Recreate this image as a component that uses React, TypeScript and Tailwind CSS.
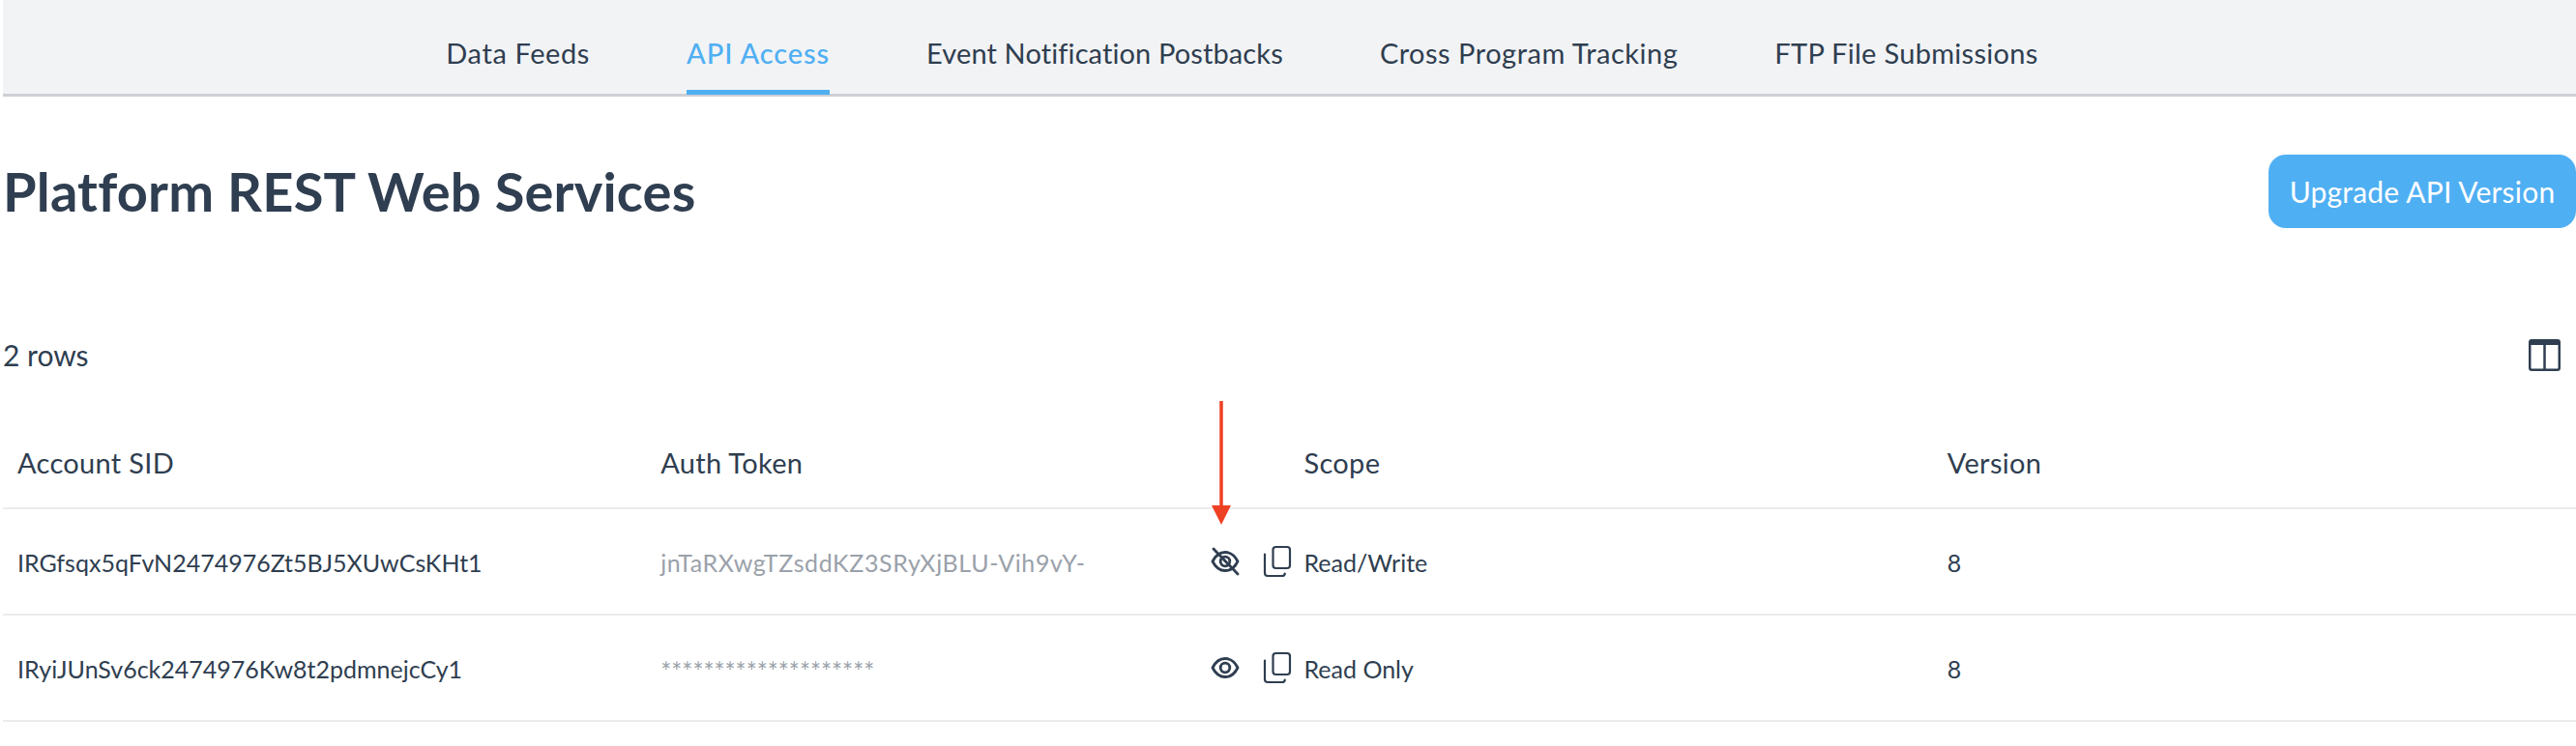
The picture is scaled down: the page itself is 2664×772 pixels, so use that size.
import React from 'react';

const tabs = [
  { label: 'Data Feeds', spacing: 'tracking-[0.6px]' },
  { label: 'API Access', spacing: 'tracking-[0.9px]' },
  { label: 'Event Notification Postbacks', spacing: 'tracking-[0.12px]' },
  { label: 'Cross Program Tracking', spacing: 'tracking-[0.5px]' },
  { label: 'FTP File Submissions', spacing: 'tracking-[0.3px]' },
];

const rows = [
  { sid: 'IRGfsqx5qFvN2474976Zt5BJ5XUwCsKHt1', token: 'jnTaRXwgTZsddKZ3SRyXjBLU-Vih9vY-', scope: 'Read/Write', version: '8', visible: true },
  { sid: 'IRyiJUnSv6ck2474976Kw8t2pdmnejcCy1', token: '********************', scope: 'Read Only', version: '8', visible: false },
];

const EyeIcon = ({ slashed }: { slashed: boolean }) => (
  <svg width="30" height="30" viewBox="0 0 30 30" fill="none" stroke="#2f3e50" strokeWidth="2.8" strokeLinecap="round" strokeLinejoin="round">
    <path d="M2 15C5 9 9.500 5.500 15 5.500S25 9 28 15c-3 6-7.500 9.500-13 9.500S5 21 2 15z" />
    <circle cx="15" cy="15" r="4.800" />
    {slashed && <path d="M3 2l25 26" />}
  </svg>
);

const CopyIcon = () => (
  <svg width="30" height="34" viewBox="0 0 30 34" fill="none" stroke="#2f3e50" strokeWidth="2.200" strokeLinecap="round" strokeLinejoin="round">
    <rect x="10.500" y="2" width="17.500" height="22" rx="3" />
    <path d="M2 9.500V29c0 1.700 1.300 3 3 3h15c1.500 0 2.600-1 2.800-2.500" />
  </svg>
);

const ColumnsIcon = () => (
  <svg width="33" height="33" viewBox="0 0 33 33" fill="none">
    <rect x="1.250" y="1.250" width="30.500" height="30.500" rx="2" stroke="#2f3e50" strokeWidth="2.500" />
    <path d="M1 2.500a2 2 0 0 1 2-2h27a2 2 0 0 1 2 2V6H1z" fill="#2f3e50" />
    <path d="M16.500 5v27" stroke="#2f3e50" strokeWidth="2.500" />
  </svg>
);

export default function App() {
  return (
    <div className="relative h-[772px] overflow-hidden bg-white pl-[3px] text-[#2f3e50] font-['Lato','Noto_Sans',sans-serif]">
      {/* Tabs */}
      <nav className="flex h-[100px] justify-center gap-[100px] border-b-[3px] border-[#cdd0d5] bg-[#f2f3f5] pr-[98px] text-[29px]">
        {tabs.map((tab) => (
          <div
            key={tab.label}
            className={`flex h-[98px] items-center border-b-[5px] pt-[17px] ${tab.spacing} ${
              tab.label === 'API Access' ? 'border-[#4fafF3] text-[#4fafF3] font-medium' : 'border-transparent'
            }`}
          >
            {tab.label}
          </div>
        ))}
      </nav>

      {/* Title */}
      <div className="flex items-center justify-between pt-[60px]">
        <h1 className="text-[56px] leading-[76px] font-bold tracking-[0.2px]">Platform REST Web Services</h1>
        <button className="h-[76px] w-[318px] rounded-[18px] bg-[#4fafF3] text-[30px] tracking-[0.2px] text-white">Upgrade API Version</button>
      </div>

      {/* Toolbar */}
      <div className="mt-[114px] flex h-[34px] items-center justify-between pr-[16px] text-[30px]">
        <span>2 rows</span>
        <ColumnsIcon />
      </div>

      {/* Table */}
      <div className="mt-[60px]">
        <div className="grid h-[83px] grid-cols-4 items-center border-b-[2px] border-[#ebebeb] text-[29px] tracking-[0.3px]">
          {['Account SID', 'Auth Token', 'Scope', 'Version'].map((h) => (
            <div key={h} className="px-[15px] pb-[11px]">{h}</div>
          ))}
        </div>
        {rows.map((row) => (
          <div key={row.sid} className="grid h-[110px] grid-cols-4 items-center border-b-[2px] border-[#ebebeb] text-[25px]">
            <div className="px-[15px] pt-[3px]">{row.sid}</div>
            <div className="flex items-center justify-between pl-[15px] pr-[-2px]">
              <span className={`text-[#9aa1aa] ${row.visible ? 'pt-[3px] tracking-[0.6px]' : 'pt-[9px] text-[26px]'}`}>{row.token}</span>
              <div className="mr-[-2px] flex items-center gap-[24px]">
                <EyeIcon slashed={row.visible} />
                <CopyIcon />
              </div>
            </div>
            <div className="px-[15px] pt-[3px]">{row.scope}</div>
            <div className="px-[15px] pt-[3px]">{row.version}</div>
          </div>
        ))}
      </div>

      {/* Red annotation arrow */}
      <svg className="absolute left-[1250px] top-[412px]" width="26" height="132" viewBox="0 0 26 132">
        <path d="M13 3v110" stroke="#ee4023" strokeWidth="3.500" />
        <path d="M3 111h20l-10 20z" fill="#ee4023" />
      </svg>
    </div>
  );
}
